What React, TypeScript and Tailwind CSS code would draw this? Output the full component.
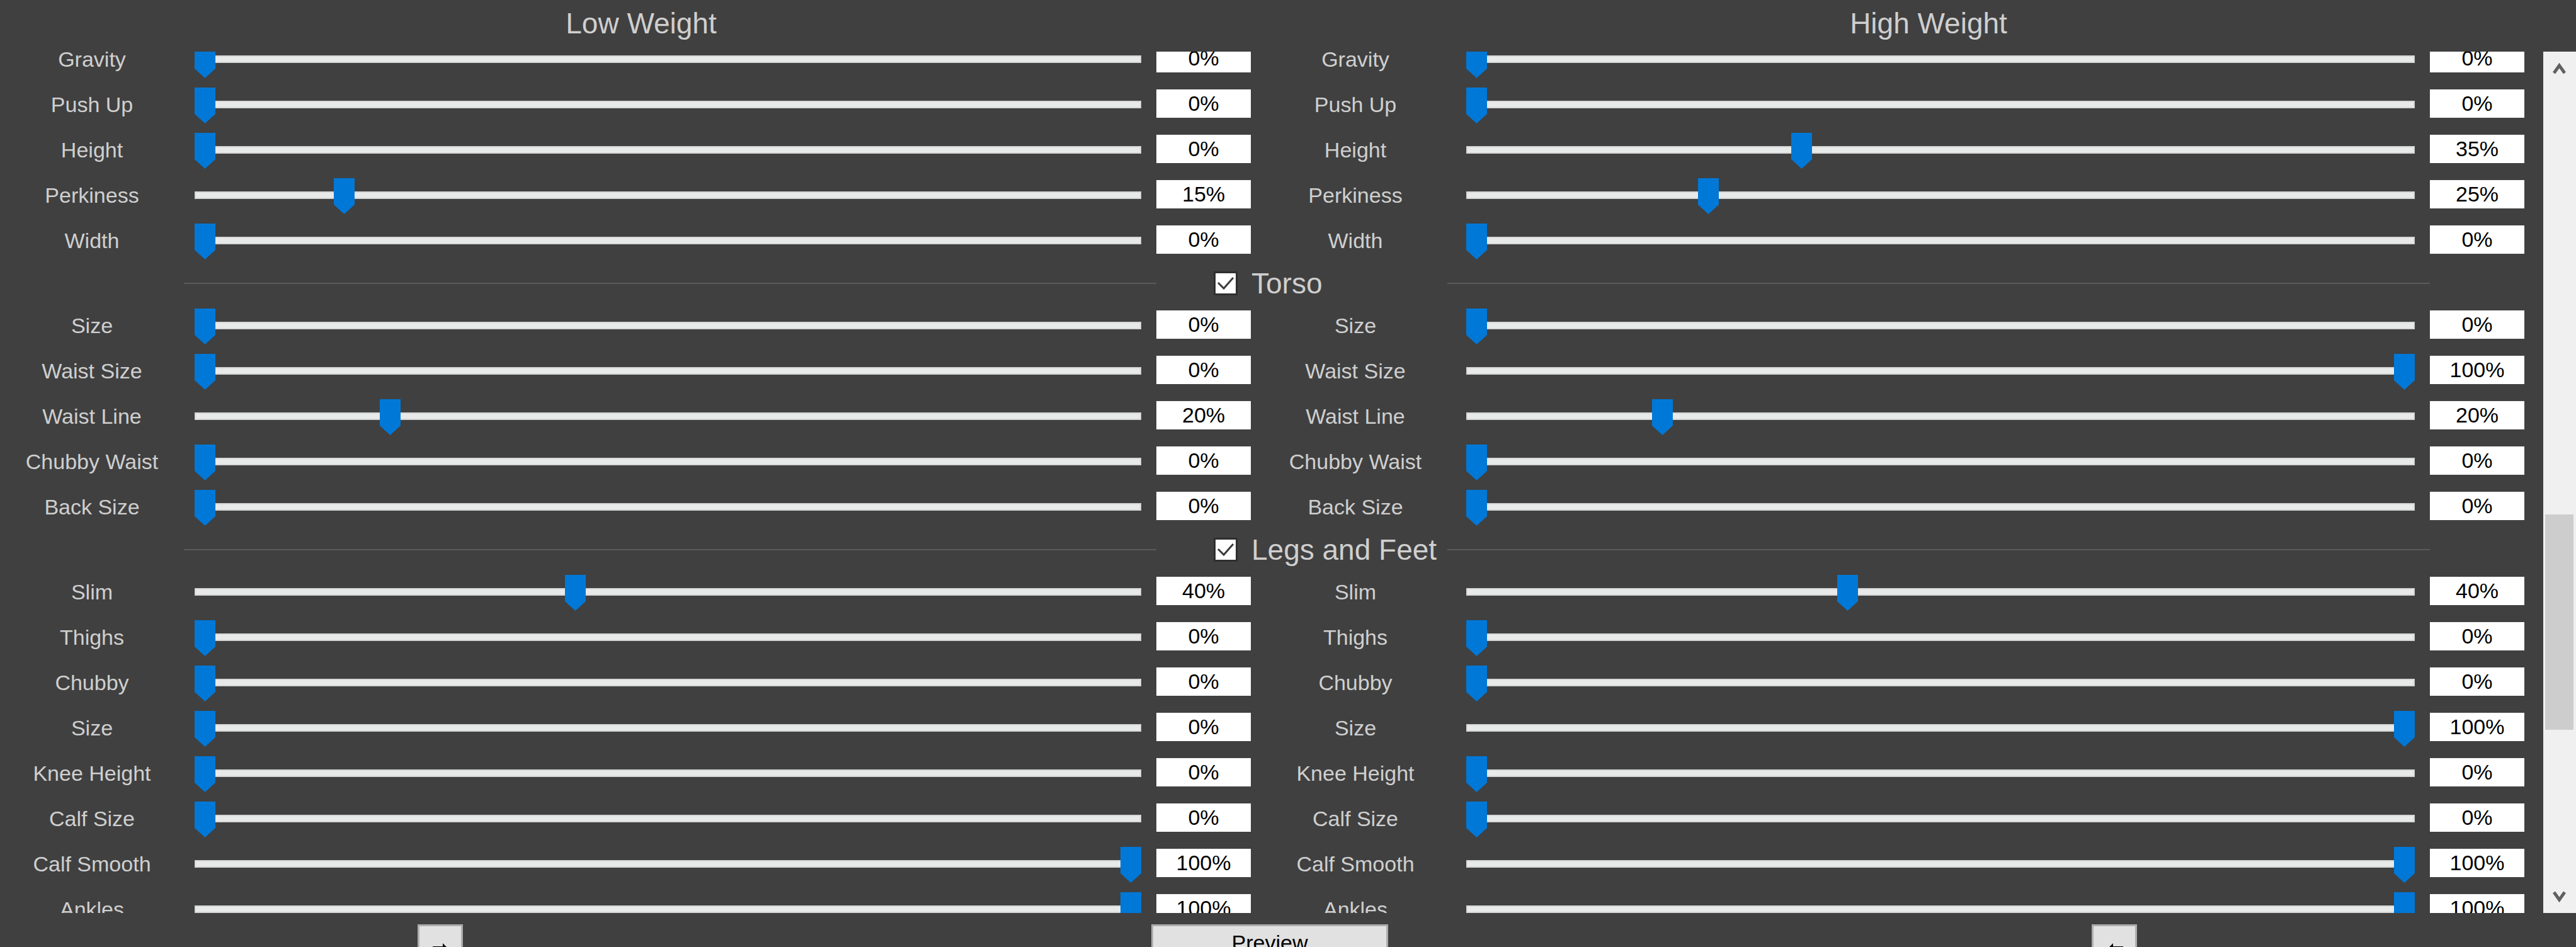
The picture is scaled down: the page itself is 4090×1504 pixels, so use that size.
import React from 'react';

type Item = { label: string; low: number; high: number };
type Section = { title?: string; items: Item[] };

const sections: Section[] = [
  {
    items: [
      { label: 'Gravity', low: 0, high: 0 },
      { label: 'Push Up', low: 0, high: 0 },
      { label: 'Height', low: 0, high: 35 },
      { label: 'Perkiness', low: 15, high: 25 },
      { label: 'Width', low: 0, high: 0 },
    ],
  },
  {
    title: 'Torso',
    items: [
      { label: 'Size', low: 0, high: 0 },
      { label: 'Waist Size', low: 0, high: 100 },
      { label: 'Waist Line', low: 20, high: 20 },
      { label: 'Chubby Waist', low: 0, high: 0 },
      { label: 'Back Size', low: 0, high: 0 },
    ],
  },
  {
    title: 'Legs and Feet',
    items: [
      { label: 'Slim', low: 40, high: 40 },
      { label: 'Thighs', low: 0, high: 0 },
      { label: 'Chubby', low: 0, high: 0 },
      { label: 'Size', low: 0, high: 100 },
      { label: 'Knee Height', low: 0, high: 0 },
      { label: 'Calf Size', low: 0, high: 0 },
      { label: 'Calf Smooth', low: 100, high: 100 },
      { label: 'Ankles', low: 100, high: 100 },
    ],
  },
];

function Label({ children }: { children: React.ReactNode }) {
  return (
    <div className="flex h-[72px] w-[292px] shrink-0 items-center justify-center whitespace-nowrap text-[34px] text-[#cfcfcf]">
      {children}
    </div>
  );
}

function Slider({ value, width, className }: { value: number; width: number; className: string }) {
  const left = (value / 100) * (width - 33);
  return (
    <div className={`relative h-[72px] shrink-0 ${className}`}>
      <div className="absolute inset-x-0 top-[30px] h-[12px] border-2 border-[#d6d6d6] bg-[#e8eaea]" />
      <svg className="absolute top-[9px]" style={{ left }} width="33" height="57" viewBox="0 0 33 57">
        <polygon points="0,0 33,0 33,42 16.5,57 0,42" fill="#0078d7" />
      </svg>
    </div>
  );
}

function ValueBox({ value }: { value: number }) {
  return (
    <div className="mt-[12px] h-[45px] w-[150px] shrink-0 bg-white text-center text-[34px] leading-[45px] text-black">
      {value}%
    </div>
  );
}

function Row({ item }: { item: Item }) {
  return (
    <div className="flex h-[72px]">
      <Label>{item.label}</Label>
      <Slider value={item.low} width={1503} className="ml-[17px] w-[1503px]" />
      <div className="ml-[24px]">
        <ValueBox value={item.low} />
      </div>
      <div className="ml-[20px]">
        <Label>{item.label}</Label>
      </div>
      <Slider value={item.high} width={1506} className="ml-[30px] w-[1506px]" />
      <div className="ml-[24px]">
        <ValueBox value={item.high} />
      </div>
    </div>
  );
}

function Checkbox() {
  return (
    <svg width="38" height="38" viewBox="0 0 38 38" className="shrink-0">
      <rect x="1.5" y="1.5" width="35" height="35" fill="#ffffff" stroke="#2f2f2f" strokeWidth="3" />
      <polyline points="7,18 16,27 31,10" fill="none" stroke="#3c3c3c" strokeWidth="3" />
    </svg>
  );
}

function SectionHeader({ title }: { title: string }) {
  return (
    <div className="flex h-[63px] items-center">
      <div className="ml-[292px] h-[2px] w-[1544px] bg-[#5a5a5a]" />
      <div className="flex w-[462px] items-center gap-[22px] pl-[91px]">
        <Checkbox />
        <span className="whitespace-nowrap text-[46px] leading-none text-[#cfcfcf]">{title}</span>
      </div>
      <div className="h-[2px] w-[1560px] bg-[#5a5a5a]" />
    </div>
  );
}

function Scrollbar() {
  return (
    <div className="relative h-full w-[52px] shrink-0 bg-[#f0f0f0]">
      <svg className="absolute left-[15px] top-[18px]" width="21" height="18" viewBox="0 0 21 18">
        <polyline points="2,16 10.5,4 19,16" fill="none" stroke="#606060" strokeWidth="5" />
      </svg>
      <div className="absolute left-[3px] top-[735px] h-[342px] w-[45px] bg-[#cdcdcd]" />
      <svg className="absolute left-[15px] top-[1333px]" width="21" height="18" viewBox="0 0 21 18">
        <polyline points="2,2 10.5,14 19,2" fill="none" stroke="#606060" strokeWidth="5" />
      </svg>
    </div>
  );
}

function SmallButton({ flip, className }: { flip?: boolean; className: string }) {
  return (
    <div className={`h-[60px] w-[72px] shrink-0 border-[3px] border-[#adadad] bg-[#e1e1e1] ${className}`}>
      <svg
        className={`ml-[21px] mt-[27px] ${flip ? '-scale-x-100' : ''}`}
        width="26"
        height="20"
        viewBox="0 0 26 20"
      >
        <polygon points="0,5 16,5 16,0 26,10 16,20 16,15 0,15" fill="#000000" />
      </svg>
    </div>
  );
}

export default function App() {
  return (
    <div className="h-[1504px] w-full overflow-hidden bg-[#404040] font-['Liberation_Sans',Arial,sans-serif]">
      <div className="flex h-[82px] pt-[10px] text-[46px] leading-[54px] text-[#cfcfcf]">
        <div className="w-[2036px] text-center">Low Weight</div>
        <div className="w-[2052px] text-center">High Weight</div>
      </div>

      <div className="flex h-[1368px] overflow-hidden">
        <div className="w-[4038px] shrink-0">
          <div className="-mt-[24px]">
            {sections.map((section, i) => (
              <div key={i}>
                {section.title && <SectionHeader title={section.title} />}
                {section.items.map((item) => (
                  <Row key={item.label} item={item} />
                ))}
              </div>
            ))}
          </div>
        </div>
        <Scrollbar />
      </div>

      <div className="flex pt-[18px]">
        <SmallButton className="ml-[663px]" />
        <div className="ml-[1093px] h-[60px] w-[376px] shrink-0 border-[3px] border-[#adadad] bg-[#e1e1e1] pt-[6px] text-center text-[34px] leading-[40px] text-black">
          Preview
        </div>
        <SmallButton flip className="ml-[1117px]" />
      </div>
    </div>
  );
}
